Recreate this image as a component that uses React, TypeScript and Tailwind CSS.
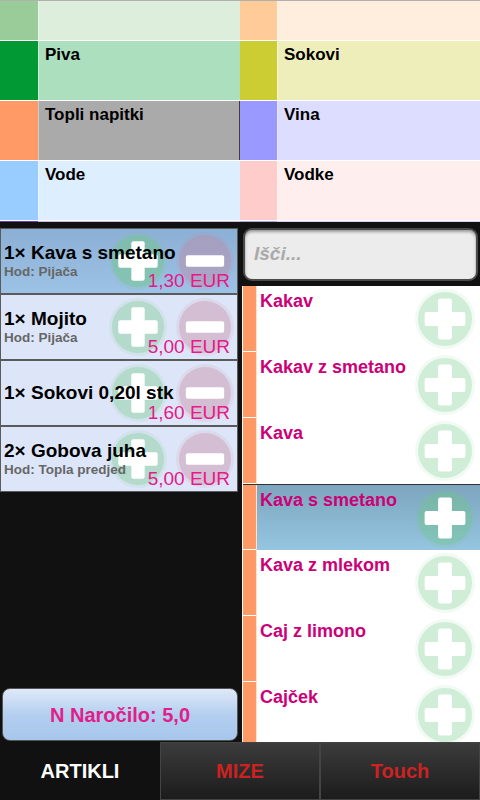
import React from "react";

/* ─── Data ─────────────────────────────────────────────────────────────── */
type Cat = { sw: string; bg: string; label: string };

const catRows: { h: string; cells: [Cat, Cat] }[] = [
  {
    h: "h-[39px]",
    cells: [
      { sw: "bg-[#99cc99]", bg: "bg-[#ddeedd]", label: "" },
      { sw: "bg-[#ffcc99]", bg: "bg-[#ffeedd]", label: "" },
    ],
  },
  {
    h: "h-[59px]",
    cells: [
      { sw: "bg-[#009933]", bg: "bg-[#acdfbd]", label: "Piva" },
      { sw: "bg-[#cccc33]", bg: "bg-[#eeeebb]", label: "Sokovi" },
    ],
  },
  {
    h: "h-[59px]",
    cells: [
      { sw: "bg-[#ff9966]", bg: "bg-[#aaaaaa]", label: "Topli napitki" },
      { sw: "bg-[#9999ff]", bg: "bg-[#ddddff]", label: "Vina" },
    ],
  },
  {
    h: "h-[59px]",
    cells: [
      { sw: "bg-[#99ccff]", bg: "bg-[#ddeeff]", label: "Vode" },
      { sw: "bg-[#ffcccc]", bg: "bg-[#ffeeee]", label: "Vodke" },
    ],
  },
];

const orders = [
  { qty: "1×", name: "Kava s smetano", hod: "Hod: Pijača", price: "1,30 EUR", active: true },
  { qty: "1×", name: "Mojito", hod: "Hod: Pijača", price: "5,00 EUR", active: false },
  { qty: "1×", name: "Sokovi 0,20l stk", hod: null, price: "1,60 EUR", active: false },
  { qty: "2×", name: "Gobova juha", hod: "Hod: Topla predjed", price: "5,00 EUR", active: false },
];

const articles = [
  { name: "Kakav", active: false },
  { name: "Kakav z smetano", active: false },
  { name: "Kava", active: false },
  { name: "Kava s smetano", active: true },
  { name: "Kava z mlekom", active: false },
  { name: "Caj z limono", active: false },
  { name: "Cajček", active: false },
];

/* ─── Round +/- buttons ────────────────────────────────────────────────── */
function PlusCircle({ size, alpha }: { size: number; alpha: number }) {
  const r = size / 2;
  const arm = size * 0.68;
  const t = size * 0.23;
  return (
    <svg width={size} height={size} viewBox={`0 0 ${size} ${size}`}>
      <circle cx={r} cy={r} r={r} fill={`rgba(110,200,130,${alpha * 0.35})`} />
      <circle cx={r} cy={r} r={r - 3} fill={`rgba(110,200,130,${alpha})`} />
      <rect x={r - arm / 2} y={r - t / 2} width={arm} height={t} rx={2} fill="#fff" />
      <rect x={r - t / 2} y={r - arm / 2} width={t} height={arm} rx={2} fill="#fff" />
    </svg>
  );
}

function MinusCircle({ size }: { size: number }) {
  const r = size / 2;
  const arm = size * 0.66;
  const t = size * 0.2;
  return (
    <svg width={size} height={size} viewBox={`0 0 ${size} ${size}`}>
      <circle cx={r} cy={r} r={r} fill="rgba(200,130,160,0.12)" />
      <circle cx={r} cy={r} r={r - 3} fill="rgba(200,130,160,0.32)" />
      <rect x={r - arm / 2} y={r - t / 2} width={arm} height={t} rx={2} fill="#fff" />
    </svg>
  );
}

/* ─── App ──────────────────────────────────────────────────────────────── */
export default function App() {
  return (
    <div className="flex h-[800px] w-[480px] flex-col overflow-hidden bg-[#111] font-['Liberation_Sans',Arial,sans-serif]">
      {/* ── Category grid ─────────────────────────────────────────── */}
      <div className="flex flex-col gap-px border-t border-[#b0b0b0] bg-white">
        {catRows.map((row, i) => (
          <div key={i} className={`flex ${row.h}`}>
            {row.cells.map((c, j) => (
              <div key={j} className="flex w-[240px]">
                <div className={`${j === 0 ? "w-[38px]" : "w-[37px]"} shrink-0 ${c.sw}`} />
                <div
                  className={`flex-1 border-l border-white/40 pl-[6px] pt-[1px] text-[17px] font-bold text-black ${c.bg} ${
                    i === 2 && j === 0 ? "border-r border-r-[#4a3a30]" : ""
                  }`}
                >
                  {c.label}
                </div>
              </div>
            ))}
          </div>
        ))}
        <div className="flex h-px">
          <div className="w-[38px] bg-[#6a3fbf]" />
          <div className="w-[202px] bg-[#c8b8ee]" />
          <div className="w-[37px] bg-[#aaaadd]" />
          <div className="flex-1 bg-[#d8d0f0]" />
        </div>
      </div>

      {/* ── Main area ─────────────────────────────────────────────── */}
      <div className="flex h-[520px] pt-[1px]">
        {/* Order list */}
        <div className="flex w-[240px] flex-col pt-[5px]">
          {orders.map((o, i) => (
            <div
              key={i}
              className={`relative h-[66px] w-[238px] border border-[#5a5a5a] ${
                o.active
                  ? "bg-gradient-to-b from-[#8cb0d5] to-[#9cc2e5]"
                  : "bg-[#dde6f8]"
              }`}
            >
              <div className="absolute left-[108px] top-1/2 -translate-y-1/2">
                <PlusCircle size={58} alpha={o.active ? 0.38 : 0.3} />
              </div>
              <div className="absolute left-[175px] top-1/2 -translate-y-1/2">
                <MinusCircle size={58} />
              </div>
              <div className="relative flex h-full flex-col justify-center pl-[3px]">
                <div className="text-[19px] font-bold leading-[22px] text-black">
                  {o.qty} {o.name}
                </div>
                {o.hod && (
                  <div className="text-[13.5px] font-bold leading-[16px] text-[#666]">{o.hod}</div>
                )}
              </div>
              <div className="absolute bottom-[3px] right-[7px] text-[19px] leading-none text-[#e5198a]">
                {o.price}
              </div>
            </div>
          ))}
          <div className="flex-1" />
          <button className="mx-[2px] mb-[1px] h-[53px] w-[236px] rounded-[8px] border border-[#555] bg-gradient-to-b from-[#dfe9f8] via-[#b4cff0] to-[#a6c6ec] text-[20px] font-bold text-[#e0208a]">
            N Naročilo: 5,0
          </button>
        </div>

        {/* Article search + list */}
        <div className="flex w-[240px] flex-col pl-[3px] pr-[2px] pt-[5px]">
          <div className="flex h-[53px] items-center rounded-[9px] border-2 border-[#4a4a4a] bg-[#ececec] pl-[9px] shadow-[inset_0_2px_3px_rgba(0,0,0,0.35)]">
            <span className="text-[19px] font-bold italic text-[#aaa]">Išči...</span>
          </div>
          <div className="-ml-px -mr-[2px] mt-[5px] flex-1 overflow-hidden border-l border-white bg-white">
            {articles.map((a, i) => (
              <div
                key={i}
                className={`flex h-[66px] ${
                  a.active
                    ? "border-t border-[#333] bg-gradient-to-b from-[#7da5bf] to-[#95c5e0]"
                    : ""
                }`}
              >
                <div className="w-[13px] shrink-0 border-b border-white bg-[#ff9966]" />
                <div className="relative flex-1 border-l border-[#ffe0cc] pl-[3px] pt-[2px]">
                  <div className="text-[18px] font-bold text-[#cc0077]">{a.name}</div>
                  <div className="absolute right-[5px] top-1/2 -translate-y-1/2">
                    <PlusCircle size={60} alpha={a.active ? 0.32 : 0.26} />
                  </div>
                </div>
              </div>
            ))}
          </div>
        </div>
      </div>

      {/* ── Footer tabs ───────────────────────────────────────────── */}
      <div className="grid h-[58px] grid-cols-3">
        <div className="flex items-center justify-center bg-[#111] text-[20px] font-bold text-white">
          ARTIKLI
        </div>
        <div className="flex items-center justify-center border border-[#444] bg-gradient-to-b from-[#3c3c3c] to-[#1c1c1c] text-[20px] font-bold text-[#cc2222]">
          MIZE
        </div>
        <div className="flex items-center justify-center border border-[#444] bg-gradient-to-b from-[#3c3c3c] to-[#1c1c1c] text-[20px] font-bold text-[#cc2222]">
          Touch
        </div>
      </div>
    </div>
  );
}
